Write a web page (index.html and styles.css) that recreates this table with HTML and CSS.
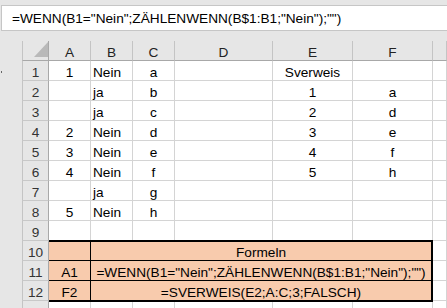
FILE: index.html
```html
<!DOCTYPE html>
<html lang="de">
<head>
<meta charset="utf-8">
<title>Excel</title>
<link rel="stylesheet" href="styles.css">
</head>
<body>
<div class="fbar">=WENN(B1="Nein";ZÄHLENWENN(B$1:B1;"Nein");"")</div>
<div class="main">
  <div class="gutter"><div class="dot"></div></div>
  <div class="sheet">
    <div class="corner"><svg width="14" height="15" viewBox="0 0 14 15"><polygon points="14,0 14,15 0,15" fill="#b9b9b9"/></svg></div>
    <div class="ch">A</div><div class="ch">B</div><div class="ch">C</div><div class="ch">D</div><div class="ch">E</div><div class="ch">F</div><div class="ch"></div>

    <div class="rh">1</div><div class="c">1</div><div class="c l">Nein</div><div class="c">a</div><div class="c"></div><div class="c">Sverweis</div><div class="c"></div><div class="c"></div>
    <div class="rh">2</div><div class="c"></div><div class="c l">ja</div><div class="c">b</div><div class="c"></div><div class="c">1</div><div class="c">a</div><div class="c"></div>
    <div class="rh">3</div><div class="c"></div><div class="c l">ja</div><div class="c">c</div><div class="c"></div><div class="c">2</div><div class="c">d</div><div class="c"></div>
    <div class="rh">4</div><div class="c">2</div><div class="c l">Nein</div><div class="c">d</div><div class="c"></div><div class="c">3</div><div class="c">e</div><div class="c"></div>
    <div class="rh">5</div><div class="c">3</div><div class="c l">Nein</div><div class="c">e</div><div class="c"></div><div class="c">4</div><div class="c">f</div><div class="c"></div>
    <div class="rh">6</div><div class="c">4</div><div class="c l">Nein</div><div class="c">f</div><div class="c"></div><div class="c">5</div><div class="c">h</div><div class="c"></div>
    <div class="rh">7</div><div class="c"></div><div class="c l">ja</div><div class="c">g</div><div class="c"></div><div class="c"></div><div class="c"></div><div class="c"></div>
    <div class="rh">8</div><div class="c">5</div><div class="c l">Nein</div><div class="c">h</div><div class="c"></div><div class="c"></div><div class="c"></div><div class="c"></div>
    <div class="rh">9</div><div class="c"></div><div class="c"></div><div class="c"></div><div class="c"></div><div class="c"></div><div class="c"></div><div class="c"></div>

    <div class="rh">10</div>
    <div class="formeln">
      <div class="f fa fb"></div><div class="f fb">Formeln</div>
      <div class="f fa fb">A1</div><div class="f fb">=WENN(B1="Nein";ZÄHLENWENN(B$1:B1;"Nein");"")</div>
      <div class="f fa">F2</div><div class="f">=SVERWEIS(E2;A:C;3;FALSCH)</div>
    </div>
    <div class="c"></div>
    <div class="rh">11</div><div class="c"></div>
    <div class="rh">12</div><div class="c"></div>
    <div class="rh"></div><div class="c"></div><div class="c"></div><div class="c"></div><div class="c"></div><div class="c"></div><div class="c"></div><div class="c"></div>
  </div>
</div>
</body>
</html>
```
FILE: styles.css
```css
html, body {
  margin: 0;
  height: 308px;
  overflow: hidden;
}
body {
  background: #e6e6e6;
  font-family: "Liberation Sans", Arial, sans-serif;
  font-size: 13.65px;
  color: #000;
}
.fbar {
  margin: 5px 0 0 1px;
  height: 26px;
  box-sizing: border-box;
  background: #fff;
  border: 1px solid #c6c6c6;
  border-right: 0;
  padding-left: 10px;
  line-height: 25px;
  white-space: nowrap;
}
.main {
  display: flex;
  margin-top: 10px;
}
.gutter {
  width: 22px;
  flex: none;
}
.dot {
  width: 1px;
  height: 2px;
  background: #666;
  margin: 30px 0 0 1px;
}
.sheet {
  flex: 1;
  display: grid;
  grid-template-columns: 27px 42px 42px 42px 98px 80px 80px 1fr;
  grid-auto-rows: 20px;
}
.corner {
  box-sizing: border-box;
  border-left: 1px solid #c4c4c4;
  border-right: 1px solid #a8a8a8;
  border-bottom: 1px solid #a8a8a8;
  display: flex;
  justify-content: flex-end;
  align-items: flex-end;
  padding-bottom: 3px;
}
.corner svg { display: block; }
.ch {
  box-sizing: border-box;
  background: #e6e6e6;
  border-right: 1px solid #c4c4c4;
  border-bottom: 1px solid #a8a8a8;
  color: #222;
  display: flex;
  justify-content: center;
  align-items: flex-end;
  line-height: 15px;
}
.rh {
  grid-column: 1;
  box-sizing: border-box;
  background: #e6e6e6;
  border-left: 1px solid #c4c4c4;
  border-right: 1px solid #a8a8a8;
  border-bottom: 1px solid #c8c8c8;
  color: #333;
  display: flex;
  justify-content: center;
  align-items: flex-end;
  line-height: 15px;
}
.c {
  box-sizing: border-box;
  background: #fff;
  border-right: 1px solid #d4d4d4;
  border-bottom: 1px solid #d4d4d4;
  display: flex;
  justify-content: center;
  align-items: flex-end;
  line-height: 15px;
  white-space: nowrap;
  overflow: hidden;
}
.c.l {
  justify-content: flex-start;
  padding-left: 2px;
}
.formeln {
  grid-column: 2 / 8;
  grid-row: 11 / 14;
  margin: -1px 0;
  z-index: 1;
  background: #f8cbad;
  border: 2px solid #000;
  border-left: 0;
  display: grid;
  grid-template-columns: 42px 1fr;
  grid-template-rows: 19px 20px 19px;
}
.f {
  box-sizing: border-box;
  display: flex;
  justify-content: center;
  align-items: flex-end;
  line-height: 15px;
  white-space: nowrap;
}
.fa { border-right: 1px solid #000; }
.fb { border-bottom: 1px solid #000; }
```
